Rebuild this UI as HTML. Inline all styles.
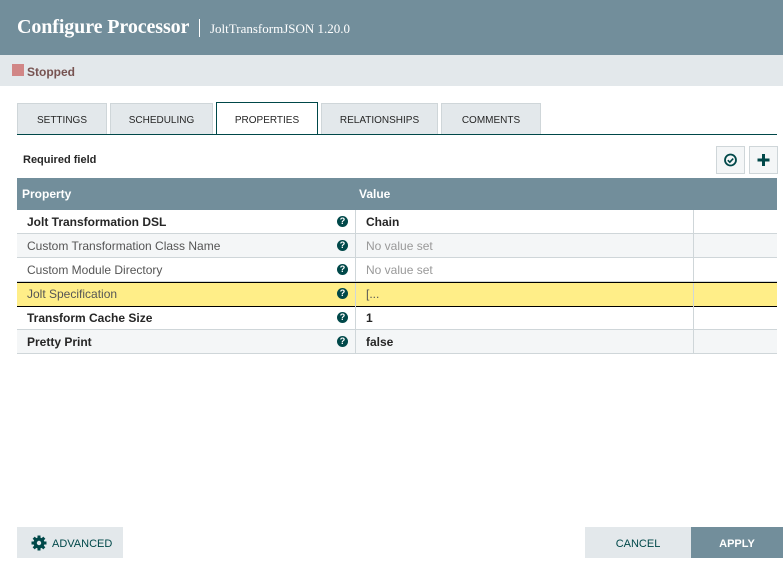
<!DOCTYPE html>
<html><head><style>
*{box-sizing:border-box;margin:0;padding:0}
body{width:783px;height:558px;position:relative;background:#fff;font-family:"Liberation Sans",sans-serif;overflow:hidden}
.hdr{position:absolute;left:0;top:0;width:783px;height:55px;background:#728e9b;color:#fff}
.title{position:absolute;left:17px;top:16px;font-family:"Liberation Serif",serif;font-weight:bold;font-size:20px;letter-spacing:-0.1px}
.sep{position:absolute;left:199px;top:19px;width:1px;height:18px;background:#fff}
.sub{position:absolute;left:210px;top:21px;font-family:"Liberation Serif",serif;font-size:13px}
.status{position:absolute;left:0;top:55px;width:783px;height:31px;background:#e3e8eb}
.sq{position:absolute;left:12px;top:9px;width:12px;height:12px;background:#d18686}
.st{position:absolute;left:27px;top:10px;font-size:12px;font-weight:bold;color:#775351}
.tab{position:absolute;top:103px;height:31px;background:#e3e8eb;border:1px solid #cfd6d9;border-bottom:none;font-size:10px;color:#262626;text-align:center;line-height:34px}
.tab.act{background:#fff;border:1px solid #004849;border-bottom:none;height:33px}
.line{position:absolute;left:17px;top:134px;width:760px;height:1px;background:#004849}
.req{position:absolute;left:23px;top:154px;font-size:11px;font-weight:bold;color:#262626}
.btn{position:absolute;top:146px;width:29px;height:28px;background:#f4f6f7;border:1px solid #cfd6d9;color:#004849;text-align:center}
.th{position:absolute;left:17px;top:178px;width:760px;height:32px;background:#728e9b;color:#fff;font-size:12px;font-weight:bold}
.row{position:absolute;left:17px;width:760px;height:24px;border-bottom:1px solid #cfd6d9;font-size:12px;color:#262626}
.row span{position:absolute;top:5px}
.row .n{left:10px}.row .v{left:349px}
.row .q{position:absolute;left:320px;top:6px;width:11px;height:11px;border-radius:50%;background:#004849;color:#fff;font-size:9px;font-weight:bold;text-align:center;line-height:11px}
.vl{position:absolute;left:338px;top:0;width:1px;height:24px;background:#cfd6d9}
.vl2{position:absolute;left:676px;top:0;width:1px;height:24px;background:#cfd6d9}
.b{font-weight:bold}.g{color:#999}.alt{background:#f4f6f7}
.adv{position:absolute;left:17px;top:527px;width:106px;height:31px;background:#e3e8eb;font-size:11px;color:#004849;line-height:34px;padding-left:35px}
.cancel{position:absolute;left:585px;top:527px;width:106px;height:31px;background:#e3e8eb;font-size:11px;color:#004849;text-align:center;line-height:34px}
.apply{position:absolute;left:691px;top:527px;width:92px;height:31px;background:#728e9b;font-size:11px;color:#fff;font-weight:bold;text-align:center;line-height:34px}
</style></head><body>
<div class="hdr"><div class="title">Configure Processor</div><div class="sep"></div><div class="sub">JoltTransformJSON 1.20.0</div></div>
<div class="status"><div class="sq"></div><div class="st">Stopped</div></div>
<div class="tab" style="left:17px;width:90px">SETTINGS</div>
<div class="tab" style="left:110px;width:103px">SCHEDULING</div>
<div class="tab act" style="left:216px;width:102px;top:102px;line-height:36px">PROPERTIES</div>
<div class="tab" style="left:321px;width:117px">RELATIONSHIPS</div>
<div class="tab" style="left:441px;width:100px">COMMENTS</div>
<div class="line"></div>
<div class="req">Required field</div>
<div class="btn" style="left:716px"><svg width="27" height="26" viewBox="0 0 27 26"><circle cx="13.5" cy="13" r="5.5" fill="none" stroke="#004849" stroke-width="1.8"/><path d="M10.8 13.2l2 2 3.4-3.6" fill="none" stroke="#004849" stroke-width="1.6"/></svg></div>
<div class="btn" style="left:749px"><svg width="27" height="26" viewBox="0 0 27 26"><path d="M13.5 7v12M7.5 13h12" stroke="#004849" stroke-width="3"/></svg></div>
<div class="th"><span style="position:absolute;left:5px;top:9px">Property</span><span style="position:absolute;left:342px;top:9px">Value</span></div>
<div class="row" style="top:210px"><span class="n b">Jolt Transformation DSL</span><div class="q">?</div><div class="vl"></div><span class="v b">Chain</span><div class="vl2"></div></div>
<div class="row alt" style="top:234px"><span class="n" style="color:#555">Custom Transformation Class Name</span><div class="q">?</div><div class="vl"></div><span class="v g">No value set</span><div class="vl2"></div></div>
<div class="row" style="top:258px"><span class="n" style="color:#555">Custom Module Directory</span><div class="q">?</div><div class="vl"></div><span class="v g">No value set</span><div class="vl2"></div></div>
<div class="row" style="top:282px;background:#ffee88;border-top:1px solid #000;border-bottom:1px solid #000;height:25px"><span class="n" style="color:#555;top:4px">Jolt Specification</span><div class="q" style="top:5px">?</div><div class="vl"></div><span class="v" style="color:#555;top:4px">[...</span><div class="vl2"></div></div>
<div class="row" style="top:307px;height:23px"><span class="n b" style="top:4px">Transform Cache Size</span><div class="q" style="top:5px">?</div><div class="vl"></div><span class="v b" style="top:4px">1</span><div class="vl2"></div></div>
<div class="row alt" style="top:330px"><span class="n b">Pretty Print</span><div class="q">?</div><div class="vl"></div><span class="v b">false</span><div class="vl2"></div></div>
<div class="adv"><svg style="position:absolute;left:14px;top:8px" width="16" height="16" viewBox="0 0 16 16"><g fill="#004849"><circle cx="8" cy="8" r="5.5"/><rect x="6.5" y="0.5" width="3" height="15"/><rect x="0.5" y="6.5" width="15" height="3"/><rect x="6.5" y="0.5" width="3" height="15" transform="rotate(45 8 8)"/><rect x="6.5" y="0.5" width="3" height="15" transform="rotate(-45 8 8)"/></g><circle cx="8" cy="8" r="2.2" fill="#e3e8eb"/></svg>ADVANCED</div>
<div class="cancel">CANCEL</div>
<div class="apply">APPLY</div>
</body></html>
